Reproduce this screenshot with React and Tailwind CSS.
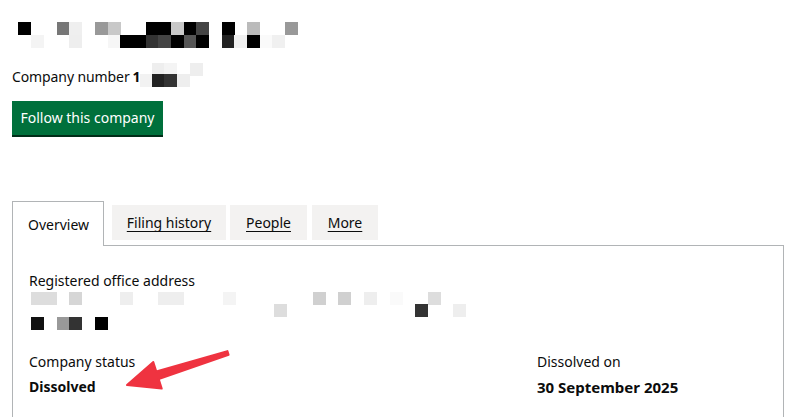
const TITLE_BLOCKS = [
  // row 1
  [18, 22, "#000"], [57, 22, "#777"], [69, 22, "#efefef"], [95, 22, "#999"], [108, 22, "#c8c8c8"],
  [146, 22, "#000"], [158, 22, "#000"], [171, 22, "#c8c8c8"], [184, 22, "#000"], [196, 22, "#444"],
  [222, 22, "#000"], [247, 22, "#bbb"], [285, 22, "#999"],
  // row 2
  [31, 35, "#f4f4f4"], [69, 35, "#eeeeee"], [108, 35, "#f6f6f6"], [120, 35, "#000"], [133, 35, "#000"],
  [146, 35, "#333"], [158, 35, "#444"], [171, 35, "#000"], [184, 35, "#555"], [196, 35, "#000"],
  [222, 35, "#222"], [234, 35, "#f0f0f0"], [247, 35, "#000"], [260, 35, "#fafafa"], [272, 35, "#f0f0f0"],
];

const NUMBER_BLOCKS = [
  [147, 61, "#eeeeee"], [159, 61, "#f4f4f4"], [185, 61, "#eeeeee"],
  [135, 72, "#f2f2f2"], [147, 72, "#222"], [159, 72, "#333"], [172, 72, "#eeeeee"],
];

const ADDRESS_BLOCKS = [
  [31, 293, "#dddddd"], [44, 293, "#dddddd"], [69, 293, "#d6d6d6"], [120, 293, "#eeeeee"],
  [158, 293, "#eeeeee"], [171, 293, "#eeeeee"], [223, 293, "#f4f4f4"], [313, 293, "#d0d0d0"],
  [338, 293, "#d0d0d0"], [364, 293, "#eeeeee"], [390, 293, "#fafafa"], [428, 293, "#dddddd"],
  [274, 305, "#dddddd"], [415, 305, "#333"], [453, 305, "#eeeeee"],
  [31, 318, "#111"], [57, 318, "#999"], [69, 318, "#333"], [95, 318, "#000"],
];

// blurred-out text, drawn as a mosaic of squares (offsets relative to the svg box)
function Mosaic({ blocks, x, y, width, height, className }) {
  return (
    <svg width={width} height={height} className={className} aria-hidden="true">
      {blocks.map(([bx, by, fill]) => (
        <rect key={`${bx}-${by}`} x={bx - x} y={by - y} width="13" height="13" fill={fill} />
      ))}
    </svg>
  );
}

const tabs = [
  { label: "Filing history", width: "ml-1 w-[114px]" },
  { label: "People", width: "w-[77px]" },
  { label: "More", width: "ml-px w-[66px]" },
];

export default function App() {
  return (
    <div
      className="relative h-[417px] w-[800px] overflow-hidden bg-white px-3 text-[#0b0c0c]"
      style={{ fontFamily: '"Noto Sans", Arial, sans-serif' }}
    >
      <Mosaic blocks={TITLE_BLOCKS} x={12} y={20} width={300} height={30} className="mt-5 block" />

      <div className="mt-[13px] flex h-[26px] items-center text-[14px]">
        <span className="tracking-[-0.1px]">Company number</span>
        <span className="ml-[3px] font-bold">1</span>
        <Mosaic blocks={NUMBER_BLOCKS} x={135} y={61} width={70} height={26} className="-ml-px block" />
      </div>

      <button
        type="button"
        className="mt-3 h-[34px] w-[151px] bg-[#00703c] pb-[2px] text-[14px] text-white shadow-[0_2px_0_#002d18]"
      >
        Follow this company
      </button>

      <div className="mt-[66px] flex items-end gap-1 text-[14px]">
        <div className="relative z-10 -mb-px flex h-[45px] w-[92px] items-center border border-b-0 border-[#b1b4b6] bg-white pl-[15px]">
          Overview
        </div>
        {tabs.map((tab) => (
          <div
            key={tab.label}
            className={`mb-[5px] flex h-[35px] items-center justify-center bg-[#f3f2f1] underline underline-offset-[3px] ${tab.width}`}
          >
            {tab.label}
          </div>
        ))}
      </div>

      <div className="h-[200px] w-[772px] border border-[#b1b4b6] px-4 pt-[26px]">
        <p className="text-[14px] leading-[18px]">Registered office address</p>
        <Mosaic blocks={ADDRESS_BLOCKS} x={29} y={291} width={440} height={41} className="block" />
        <div className="mt-[22px] flex text-[14px] leading-[18px]">
          <div className="w-[508px]">
            <p>Company status</p>
            <p className="mt-[6px] text-[14px] font-bold leading-[20px]">Dissolved</p>
          </div>
          <div>
            <p>Dissolved on</p>
            <p className="mt-[6px] text-[15px] font-bold leading-[20px]">30 September 2025</p>
          </div>
        </div>
      </div>

      <svg className="pointer-events-none absolute left-0 top-0" width="800" height="417" aria-hidden="true">
        <polygon
          points="227.4,351.1 156.3,371.5 153.3,362 127,385 161.7,388.6 158.7,379.1 228.6,354.9"
          fill="#ef3340"
          stroke="#ef3340"
          strokeWidth="2"
          strokeLinejoin="round"
        />
      </svg>
    </div>
  );
}
